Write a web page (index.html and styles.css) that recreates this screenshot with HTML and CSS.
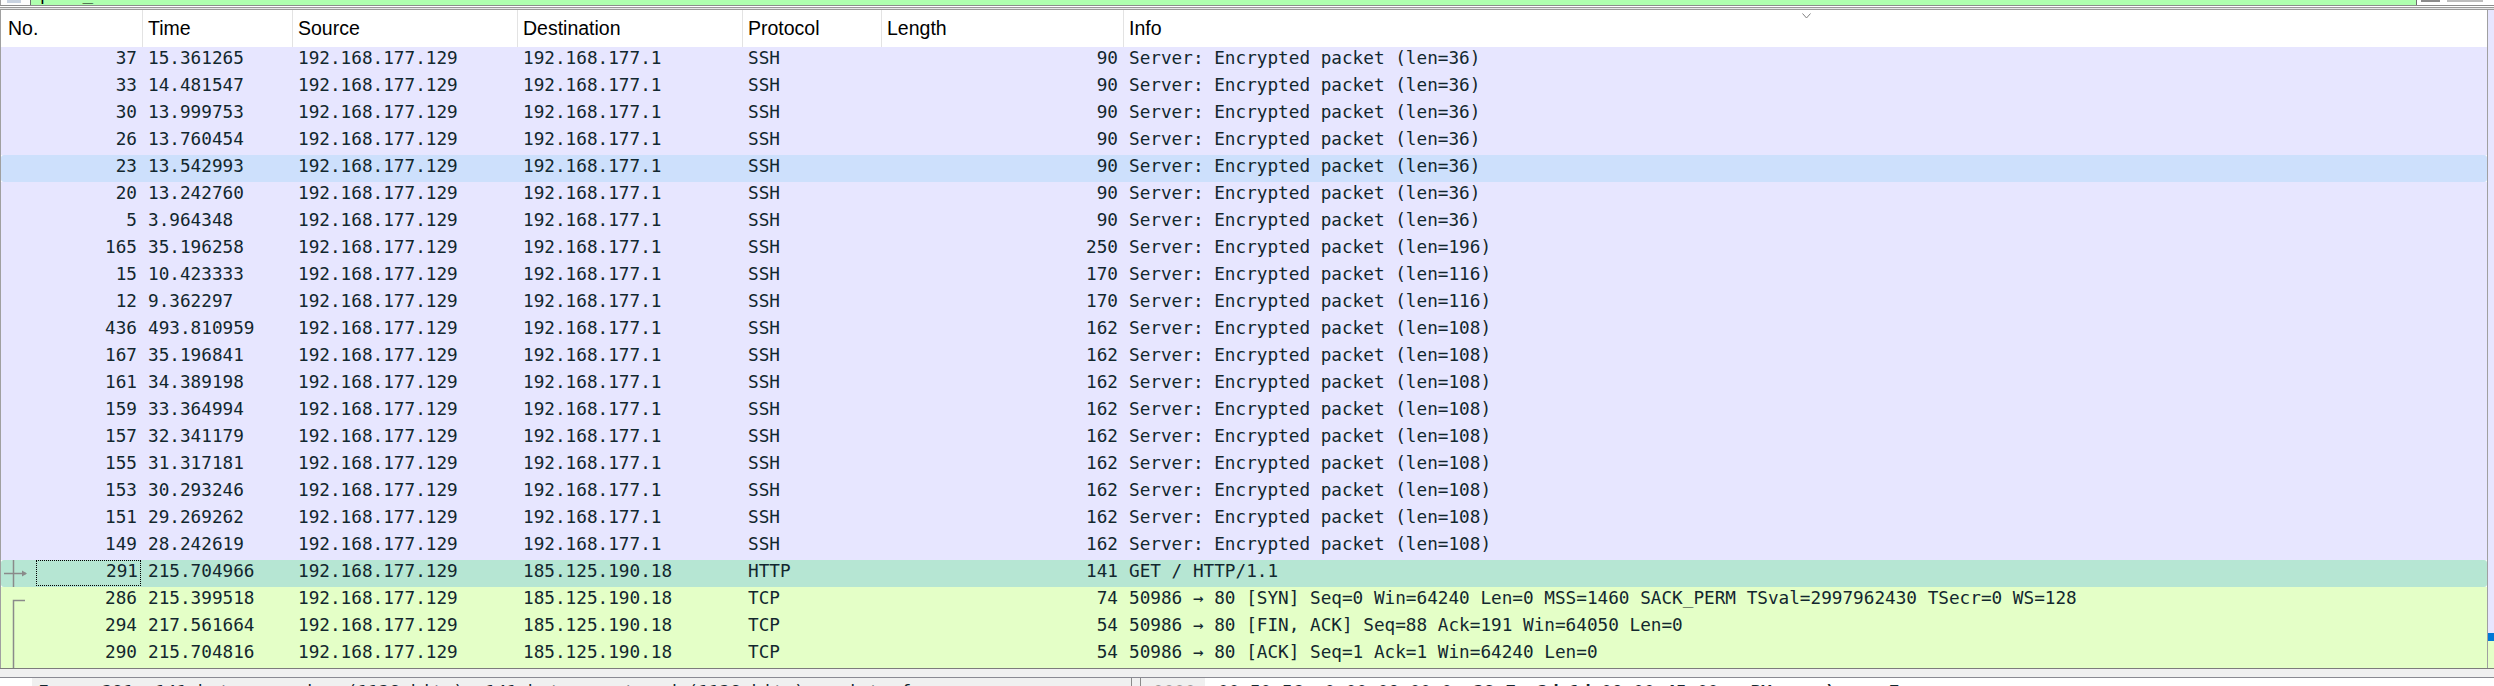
FILE: index.html
```html
<!DOCTYPE html>
<html>
<head>
<meta charset="utf-8">
<link rel="stylesheet" href="styles.css">
</head>
<body>
<div class="app">
  <div class="filterbar">
    <div class="fb-icon"><span class="fb-glyph"></span></div>
    <div class="fb-input"><span class="fb-text">port_</span></div>
    <div class="fb-tools"><span class="tool t1"></span><span class="tool t2"></span></div>
  </div>
  <div class="split"></div>
  <div class="plist">
    <div class="pl-main">
      <div class="pl-head">
        <div class="h">No.</div>
        <div class="h">Time</div>
        <div class="h">Source</div>
        <div class="h">Destination</div>
        <div class="h">Protocol</div>
        <div class="h">Length</div>
        <div class="h h-info">Info<svg class="sort" width="9" height="6" viewBox="0 0 9 6"><path d="M0.5 0.5 L4.5 5 L8.5 0.5" fill="none" stroke="#808080" stroke-width="1"/></svg></div>
      </div>
      <div class="pl-rows">
        <div class="row ssh"><div class="c no"><span class="mk"></span><span class="num">37</span></div><div class="c">15.361265</div><div class="c">192.168.177.129</div><div class="c">192.168.177.1</div><div class="c">SSH</div><div class="c r">90</div><div class="c info">Server: Encrypted packet (len=36)</div></div>
        <div class="row ssh"><div class="c no"><span class="mk"></span><span class="num">33</span></div><div class="c">14.481547</div><div class="c">192.168.177.129</div><div class="c">192.168.177.1</div><div class="c">SSH</div><div class="c r">90</div><div class="c info">Server: Encrypted packet (len=36)</div></div>
        <div class="row ssh"><div class="c no"><span class="mk"></span><span class="num">30</span></div><div class="c">13.999753</div><div class="c">192.168.177.129</div><div class="c">192.168.177.1</div><div class="c">SSH</div><div class="c r">90</div><div class="c info">Server: Encrypted packet (len=36)</div></div>
        <div class="row ssh"><div class="c no"><span class="mk"></span><span class="num">26</span></div><div class="c">13.760454</div><div class="c">192.168.177.129</div><div class="c">192.168.177.1</div><div class="c">SSH</div><div class="c r">90</div><div class="c info">Server: Encrypted packet (len=36)</div></div>
        <div class="row hover"><div class="c no"><span class="mk"></span><span class="num">23</span></div><div class="c">13.542993</div><div class="c">192.168.177.129</div><div class="c">192.168.177.1</div><div class="c">SSH</div><div class="c r">90</div><div class="c info">Server: Encrypted packet (len=36)</div></div>
        <div class="row ssh"><div class="c no"><span class="mk"></span><span class="num">20</span></div><div class="c">13.242760</div><div class="c">192.168.177.129</div><div class="c">192.168.177.1</div><div class="c">SSH</div><div class="c r">90</div><div class="c info">Server: Encrypted packet (len=36)</div></div>
        <div class="row ssh"><div class="c no"><span class="mk"></span><span class="num">5</span></div><div class="c">3.964348</div><div class="c">192.168.177.129</div><div class="c">192.168.177.1</div><div class="c">SSH</div><div class="c r">90</div><div class="c info">Server: Encrypted packet (len=36)</div></div>
        <div class="row ssh"><div class="c no"><span class="mk"></span><span class="num">165</span></div><div class="c">35.196258</div><div class="c">192.168.177.129</div><div class="c">192.168.177.1</div><div class="c">SSH</div><div class="c r">250</div><div class="c info">Server: Encrypted packet (len=196)</div></div>
        <div class="row ssh"><div class="c no"><span class="mk"></span><span class="num">15</span></div><div class="c">10.423333</div><div class="c">192.168.177.129</div><div class="c">192.168.177.1</div><div class="c">SSH</div><div class="c r">170</div><div class="c info">Server: Encrypted packet (len=116)</div></div>
        <div class="row ssh"><div class="c no"><span class="mk"></span><span class="num">12</span></div><div class="c">9.362297</div><div class="c">192.168.177.129</div><div class="c">192.168.177.1</div><div class="c">SSH</div><div class="c r">170</div><div class="c info">Server: Encrypted packet (len=116)</div></div>
        <div class="row ssh"><div class="c no"><span class="mk"></span><span class="num">436</span></div><div class="c">493.810959</div><div class="c">192.168.177.129</div><div class="c">192.168.177.1</div><div class="c">SSH</div><div class="c r">162</div><div class="c info">Server: Encrypted packet (len=108)</div></div>
        <div class="row ssh"><div class="c no"><span class="mk"></span><span class="num">167</span></div><div class="c">35.196841</div><div class="c">192.168.177.129</div><div class="c">192.168.177.1</div><div class="c">SSH</div><div class="c r">162</div><div class="c info">Server: Encrypted packet (len=108)</div></div>
        <div class="row ssh"><div class="c no"><span class="mk"></span><span class="num">161</span></div><div class="c">34.389198</div><div class="c">192.168.177.129</div><div class="c">192.168.177.1</div><div class="c">SSH</div><div class="c r">162</div><div class="c info">Server: Encrypted packet (len=108)</div></div>
        <div class="row ssh"><div class="c no"><span class="mk"></span><span class="num">159</span></div><div class="c">33.364994</div><div class="c">192.168.177.129</div><div class="c">192.168.177.1</div><div class="c">SSH</div><div class="c r">162</div><div class="c info">Server: Encrypted packet (len=108)</div></div>
        <div class="row ssh"><div class="c no"><span class="mk"></span><span class="num">157</span></div><div class="c">32.341179</div><div class="c">192.168.177.129</div><div class="c">192.168.177.1</div><div class="c">SSH</div><div class="c r">162</div><div class="c info">Server: Encrypted packet (len=108)</div></div>
        <div class="row ssh"><div class="c no"><span class="mk"></span><span class="num">155</span></div><div class="c">31.317181</div><div class="c">192.168.177.129</div><div class="c">192.168.177.1</div><div class="c">SSH</div><div class="c r">162</div><div class="c info">Server: Encrypted packet (len=108)</div></div>
        <div class="row ssh"><div class="c no"><span class="mk"></span><span class="num">153</span></div><div class="c">30.293246</div><div class="c">192.168.177.129</div><div class="c">192.168.177.1</div><div class="c">SSH</div><div class="c r">162</div><div class="c info">Server: Encrypted packet (len=108)</div></div>
        <div class="row ssh"><div class="c no"><span class="mk"></span><span class="num">151</span></div><div class="c">29.269262</div><div class="c">192.168.177.129</div><div class="c">192.168.177.1</div><div class="c">SSH</div><div class="c r">162</div><div class="c info">Server: Encrypted packet (len=108)</div></div>
        <div class="row ssh"><div class="c no"><span class="mk"></span><span class="num">149</span></div><div class="c">28.242619</div><div class="c">192.168.177.129</div><div class="c">192.168.177.1</div><div class="c">SSH</div><div class="c r">162</div><div class="c info">Server: Encrypted packet (len=108)</div></div>
        <div class="row sel"><div class="c no"><svg class="mk" width="28" height="27" viewBox="0 0 28 27"><path d="M12.5 0 V27" stroke="#8a8a8a" stroke-width="1.5" fill="none"/><path d="M3 13.5 H25" stroke="#8a8a8a" stroke-width="1.5" fill="none"/><path d="M21 10.5 L26 13.5 L21 16.5 Z" fill="#8a8a8a"/></svg><span class="num focus">291</span></div><div class="c">215.704966</div><div class="c">192.168.177.129</div><div class="c">185.125.190.18</div><div class="c">HTTP</div><div class="c r">141</div><div class="c info">GET / HTTP/1.1</div></div>
        <div class="row tcp"><div class="c no"><svg class="mk" width="28" height="27" viewBox="0 0 28 27"><path d="M12.5 27 V13.5 H24" stroke="#8a8a8a" stroke-width="1.5" fill="none"/></svg><span class="num">286</span></div><div class="c">215.399518</div><div class="c">192.168.177.129</div><div class="c">185.125.190.18</div><div class="c">TCP</div><div class="c r">74</div><div class="c info">50986 → 80 [SYN] Seq=0 Win=64240 Len=0 MSS=1460 SACK_PERM TSval=2997962430 TSecr=0 WS=128</div></div>
        <div class="row tcp"><div class="c no"><svg class="mk" width="28" height="27" viewBox="0 0 28 27"><path d="M12.5 0 V27" stroke="#8a8a8a" stroke-width="1.5" fill="none"/></svg><span class="num">294</span></div><div class="c">217.561664</div><div class="c">192.168.177.129</div><div class="c">185.125.190.18</div><div class="c">TCP</div><div class="c r">54</div><div class="c info">50986 → 80 [FIN, ACK] Seq=88 Ack=191 Win=64050 Len=0</div></div>
        <div class="row tcp"><div class="c no"><svg class="mk" width="28" height="27" viewBox="0 0 28 27"><path d="M12.5 0 V27" stroke="#8a8a8a" stroke-width="1.5" fill="none"/></svg><span class="num">290</span></div><div class="c">215.704816</div><div class="c">192.168.177.129</div><div class="c">185.125.190.18</div><div class="c">TCP</div><div class="c r">54</div><div class="c info">50986 → 80 [ACK] Seq=1 Ack=1 Win=64240 Len=0</div></div>
      </div>
    </div>
    <div class="pl-mini"><div class="mini-a"></div><div class="mini-sel"></div><div class="mini-b"></div></div>
  </div>
  <div class="split2"></div>
  <div class="panes">
    <div class="pane-tree"><span class="exp"></span><span class="tree-line">Frame 291: 141 bytes on wire (1128 bits), 141 bytes captured (1128 bits) on interface</span></div>
    <div class="pane-bytes"><span class="off">0000</span><span class="hex">00 50 56 c0 00 08 00 0c 29 7e 2d 1d 08 00 45 00  ·PV·····)~-···E·</span></div>
  </div>
</div>
</body>
</html>
```
FILE: styles.css
```css
* { box-sizing: border-box; }
html, body { margin: 0; padding: 0; }
body {
  width: 2494px;
  height: 686px;
  overflow: hidden;
  background: #f0f0f0;
  font-family: "Liberation Sans", Arial, sans-serif;
}
.app { display: flex; flex-direction: column; width: 2494px; height: 686px; }

/* display filter bar (mostly scrolled off) */
.filterbar { display: flex; height: 6px; border-bottom: 1px solid #8c8c8c; }
.fb-icon { width: 31px; background: #fdfdfd; border-right: 1px solid #6f6f6f; border-left: 1px solid #a0a0a0; padding-left: 6px; }
.fb-glyph { display: block; width: 14px; height: 3px; background: #c8d2e0; }
.fb-input { flex: 1; background: #afffaf; overflow: hidden; }
.fb-text {
  display: block;
  margin-top: -16px;
  padding-left: 9px;
  font: 17.7px/20px "DejaVu Sans Mono", monospace;
  color: #000;
  white-space: pre;
}
.fb-tools { width: 78px; background: #fff; border-left: 1px solid #6f6f6f; display: flex; gap: 7px; padding-left: 4px; align-items: flex-start; }
.tool { display: block; height: 2px; }
.t1 { width: 19px; background: #8c8c8c; }
.t2 { width: 36px; background: #bdbdbd; }

.split {
  height: 4px;
  background: linear-gradient(#ffffff 0 1px, #9a9a9a 1px 2px, #e6e6e6 2px 3px, #9a9a9a 3px 4px);
}

/* packet list */
.plist { display: flex; height: 659px; border-bottom: 1px solid #7c7c7c; }
.pl-main { flex: 1; background: #fff; border-left: 1px solid #a0a0a0; border-right: 1px solid #a0a0a0; overflow: hidden; }
.pl-mini { width: 6px; display: flex; flex-direction: column; }
.mini-a { flex: 1; background: #e7e6ff; }
.mini-sel { height: 8px; background: #0078d7; }
.mini-b { height: 27px; background: #e4ffc7; }

.pl-head, .row {
  display: grid;
  grid-template-columns: 141px 150px 225px 225px 139px 242px 1fr;
}
.pl-head { height: 37px; background: #fff; }
.h {
  position: relative;
  padding: 7px 0 0 5px;
  font-size: 19.5px;
  line-height: 22px;
  color: #000;
  border-left: 1px solid #e3e3e3;
  white-space: nowrap;
}
.h:first-child { border-left: 0; padding-left: 7px; }
.sort { position: absolute; top: 3px; left: 50%; margin-left: -4px; }

.row {
  height: 27px;
  font-family: "DejaVu Sans Mono", monospace;
  font-size: 17.7px;
  line-height: 22px;
  color: #12272e;
}
.ssh { background: #e7e6ff; }
.hover { background: #cde0fc; border-radius: 3px; }
.sel { background: #b6e6d3; border-radius: 3px; }
.tcp { background: #e4ffc7; }

.c { padding-left: 6px; white-space: nowrap; overflow: hidden; }
.c.r { text-align: right; padding-left: 0; padding-right: 5px; }
.c.info { overflow: visible; }
.c.no { display: flex; padding: 0; }
.mk { display: block; width: 28px; height: 27px; flex: none; }
.num { flex: 1; text-align: right; padding-right: 5px; }
.num.focus {
  margin: 0 1px 1px 7px;
  border: 1px dotted #000;
  padding-right: 2px;
  line-height: 20px;
}

.split2 { height: 9px; background: #f0f0f0; border-bottom: 1px solid #8a8a92; }

/* detail + bytes panes (cut off) */
.panes { flex: 1; display: flex; gap: 8px; overflow: hidden; }
.pane-tree {
  width: 1132px;
  display: flex;
  background: #f0f0f0;
  border-right: 1px solid #8a8a8a;
  overflow: hidden;
}
.exp { width: 32px; flex: none; background: #fff; }
.tree-line {
  padding: 3px 0 0 6px;
  font: 17.7px/22px "DejaVu Sans Mono", monospace;
  color: #12272e;
  white-space: nowrap;
}
.pane-bytes {
  flex: 1;
  display: flex;
  background: #fff;
  border-left: 1px solid #8a8a8a;
  overflow: hidden;
}
.off {
  width: 64px;
  padding: 3px 0 0 12px;
  background: #f0f0f0;
  font: 17.7px/22px "DejaVu Sans Mono", monospace;
  color: #9a9a9a;
}
.hex {
  padding: 3px 0 0 13px;
  font: bold 17.7px/22px "DejaVu Sans Mono", monospace;
  color: #12272e;
  white-space: pre;
}
```
